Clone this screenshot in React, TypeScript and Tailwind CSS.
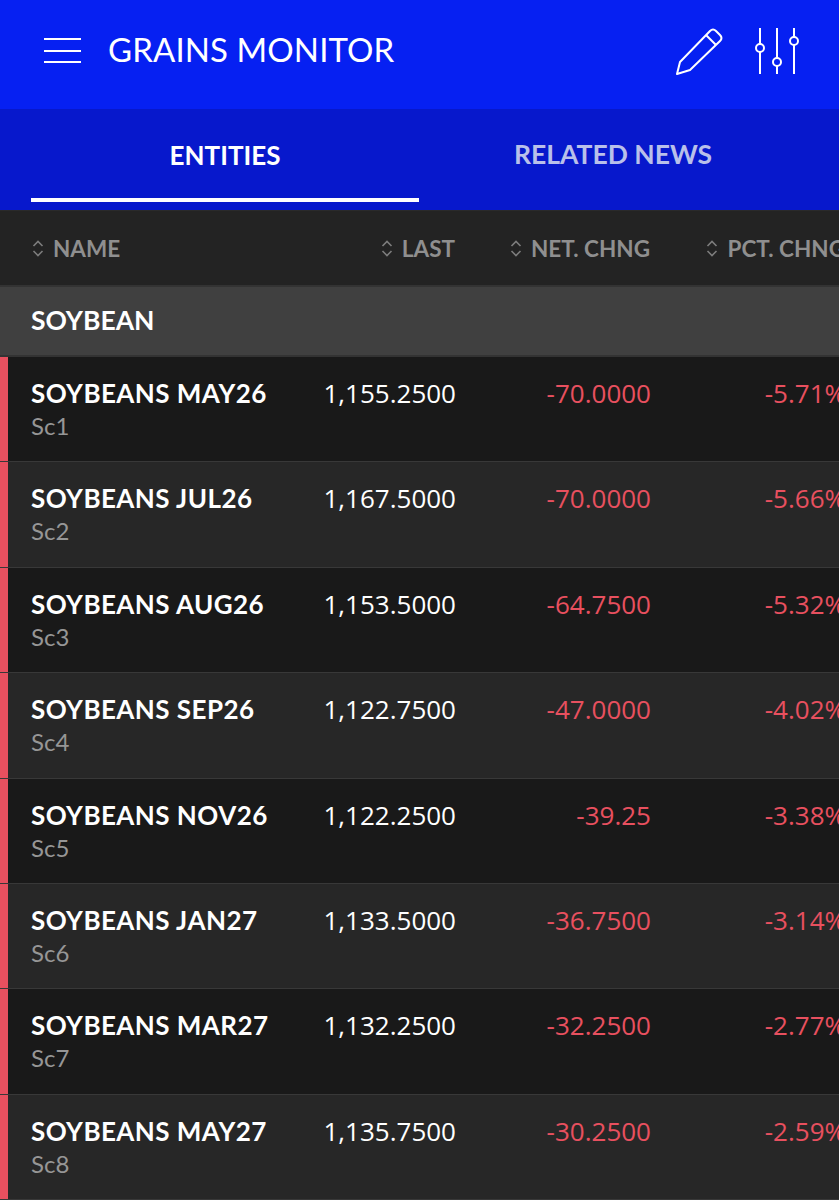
const rows = [
  { name: "SOYBEANS MAY26", ric: "Sc1", last: "1,155.2500", net: "-70.0000", pct: "-5.71%" },
  { name: "SOYBEANS JUL26", ric: "Sc2", last: "1,167.5000", net: "-70.0000", pct: "-5.66%" },
  { name: "SOYBEANS AUG26", ric: "Sc3", last: "1,153.5000", net: "-64.7500", pct: "-5.32%" },
  { name: "SOYBEANS SEP26", ric: "Sc4", last: "1,122.7500", net: "-47.0000", pct: "-4.02%" },
  { name: "SOYBEANS NOV26", ric: "Sc5", last: "1,122.2500", net: "-39.25", pct: "-3.38%" },
  { name: "SOYBEANS JAN27", ric: "Sc6", last: "1,133.5000", net: "-36.7500", pct: "-3.14%" },
  { name: "SOYBEANS MAR27", ric: "Sc7", last: "1,132.2500", net: "-32.2500", pct: "-2.77%" },
  { name: "SOYBEANS MAY27", ric: "Sc8", last: "1,135.7500", net: "-30.2500", pct: "-2.59%" },
];

function SortIcon() {
  return (
    <svg width="12" height="17" viewBox="0 0 12 17" fill="none" stroke="#7d7d7d" strokeWidth="1.6" className="mr-[9px] shrink-0">
      <path d="M1.5 6 L6 1.5 L10.5 6" />
      <path d="M1.5 11 L6 15.5 L10.5 11" />
    </svg>
  );
}

function HeadCell({ label, className }: { label: string; className: string }) {
  return (
    <div className={`flex items-center shrink-0 ${className}`}>
      <SortIcon />
      <span className="text-[22.5px] pt-[1px] font-bold text-[#8f8f8f] whitespace-nowrap">{label}</span>
    </div>
  );
}

export default function App() {
  return (
    <div className="w-[839px] h-[1200px] overflow-hidden bg-[#191919] font-['Lato',sans-serif]">
      {/* Top bar */}
      <div className="h-[109px] bg-[#0620f2] flex items-center pl-[44px] pr-[40px]">
        <div className="flex flex-col gap-[9.5px] w-[37px] -mt-[8px]">
          <div className="h-[2px] bg-white" />
          <div className="h-[2px] bg-white" />
          <div className="h-[2px] bg-white" />
        </div>
        <h1 className="ml-[27px] -mt-[9px] text-[33px] tracking-[0.1px] text-white whitespace-nowrap">GRAINS MONITOR</h1>
        <div className="ml-auto flex items-center gap-[32px] -mt-[7px]">
          <svg width="48" height="48" viewBox="0 0 48 48" fill="none" stroke="white" strokeWidth="2" strokeLinejoin="round">
            <path d="M2 47 L5 35 L35 4 Q38 1 41 4 L45 8 Q48 11 45 14 L15 43 Z" />
            <path d="M31 8 L41 18" />
          </svg>
          <svg width="44" height="46" viewBox="0 0 44 46" fill="none" stroke="white" strokeWidth="2">
            <path d="M5 0 V16 M5 24 V46 M22 0 V30 M22 38 V46 M39 0 V9 M39 17 V46" />
            <circle cx="5" cy="20" r="4" />
            <circle cx="22" cy="34" r="4" />
            <circle cx="39" cy="13" r="4" />
          </svg>
        </div>
      </div>

      {/* Tabs */}
      <div className="h-[101px] bg-[#0718cc] flex px-[31px]">
        <div className="w-[388px] flex flex-col items-center">
          <div className="flex-1 flex items-center justify-center text-[26px] font-bold text-white pt-[3px]">ENTITIES</div>
          <div className="h-[4px] w-full bg-white mb-[8px]" />
        </div>
        <div className="w-[388px] flex items-center justify-center text-[26.5px] font-bold text-[#b9c0ea] pb-[10px]">
          RELATED NEWS
        </div>
      </div>

      {/* Column headers */}
      <div className="h-[75px] bg-[#232323] flex items-center border-t border-[#2a2a2a]">
        <HeadCell label="NAME" className="w-[313px] pl-[32px]" />
        <HeadCell label="LAST" className="w-[162px] justify-end pr-[20px]" />
        <HeadCell label="NET. CHNG" className="w-[195px] justify-end pr-[20px]" />
        <HeadCell label="PCT. CHNG" className="w-[195px] justify-end pr-[20px]" />
      </div>

      {/* Group */}
      <div className="h-[72px] bg-[#404040] border-y-2 border-[#333333] flex items-center pl-[31px] text-[26.5px] font-bold text-white">
        SOYBEAN
      </div>

      {/* Rows */}
      {rows.map((row, i) => (
        <div
          key={row.ric}
          className={`h-[105.4px] flex border-b border-[#383838] ${i % 2 === 0 ? "bg-[#191919]" : "bg-[#272727]"}`}
        >
          <div className="w-[8px] shrink-0 bg-[#e8505f]" />
          <div className="w-[305px] shrink-0 pl-[23px] pt-[19px]">
            <div className="text-[26px] leading-[34px] tracking-[0.45px] font-bold text-white whitespace-nowrap">{row.name}</div>
            <div className="text-[24px] leading-[32px] text-[#969696]">{row.ric}</div>
          </div>
          <div className="w-[162px] shrink-0 pr-[19px] pt-[19px] text-right text-[26px] leading-[34px] font-medium font-['Open_Sans',sans-serif] text-white whitespace-nowrap">
            {row.last}
          </div>
          <div className="w-[195px] shrink-0 pr-[19px] pt-[19px] text-right text-[26px] leading-[34px] font-['Open_Sans',sans-serif] text-[#e8505f]">
            {row.net}
          </div>
          <div className="w-[195px] shrink-0 pr-[19px] pt-[19px] text-right text-[26px] leading-[34px] font-['Open_Sans',sans-serif] text-[#e8505f]">
            {row.pct}
          </div>
        </div>
      ))}
    </div>
  );
}
